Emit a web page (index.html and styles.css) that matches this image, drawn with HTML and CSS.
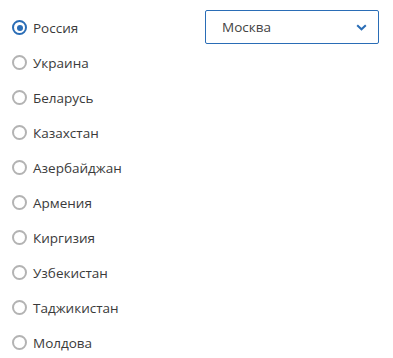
FILE: index.html
```html
<!DOCTYPE html>
<html lang="ru">
<head>
    <meta charset="UTF-8">
    <meta name="viewport" content="width=device-width, initial-scale=1.0">
    <title>Страна</title>
    <link rel="stylesheet" href="styles.css">
</head>
<body>

    <div class="wrap">
        <div class="countries">
            <label class="country"><span class="radio checked"></span>Россия</label>
            <label class="country"><span class="radio"></span>Украина</label>
            <label class="country"><span class="radio"></span>Беларусь</label>
            <label class="country"><span class="radio"></span>Казахстан</label>
            <label class="country"><span class="radio"></span>Азербайджан</label>
            <label class="country"><span class="radio"></span>Армения</label>
            <label class="country"><span class="radio"></span>Киргизия</label>
            <label class="country"><span class="radio"></span>Узбекистан</label>
            <label class="country"><span class="radio"></span>Таджикистан</label>
            <label class="country"><span class="radio"></span>Молдова</label>
        </div>

        <div class="city-select">
            <span>Москва</span>
            <svg class="chevron" width="11" height="7" viewBox="0 0 11 7">
                <path d="M1.2 1.2 L5.5 5.3 L9.8 1.2" fill="none" stroke="#2a6db6" stroke-width="2"/>
            </svg>
        </div>
    </div>

</body>
</html>
```

FILE: styles.css
```css
* {
    box-sizing: border-box;
}
body {
    font-family: 'Open Sans', 'Noto Sans', sans-serif;
    font-size: 13.5px;
    color: #3a3a3a;
    background-color: white;
    margin: 0;
    padding: 0;
}
.wrap {
    display: flex;
    padding: 10px 0 0 12px;
}
.countries {
    width: 193px;
    display: flex;
    flex-direction: column;
}
.country {
    display: flex;
    align-items: center;
    height: 35px;
    gap: 6px;
    cursor: pointer;
}
.radio {
    width: 15px;
    height: 15px;
    border-radius: 50%;
    border: 2px solid #b3b3b3;
    flex-shrink: 0;
    position: relative;
}
.radio.checked {
    border-color: #2a6db6;
}
.radio.checked::after {
    content: "";
    position: absolute;
    left: 2.5px;
    top: 2.5px;
    width: 6px;
    height: 6px;
    border-radius: 50%;
    background-color: #2a6db6;
}
.city-select {
    width: 174px;
    height: 34px;
    border: 1px solid #2a6db6;
    border-radius: 2px;
    display: flex;
    align-items: center;
    justify-content: space-between;
    padding: 0 11px 0 16px;
    color: #444;
}
.chevron {
    display: block;
}
```
